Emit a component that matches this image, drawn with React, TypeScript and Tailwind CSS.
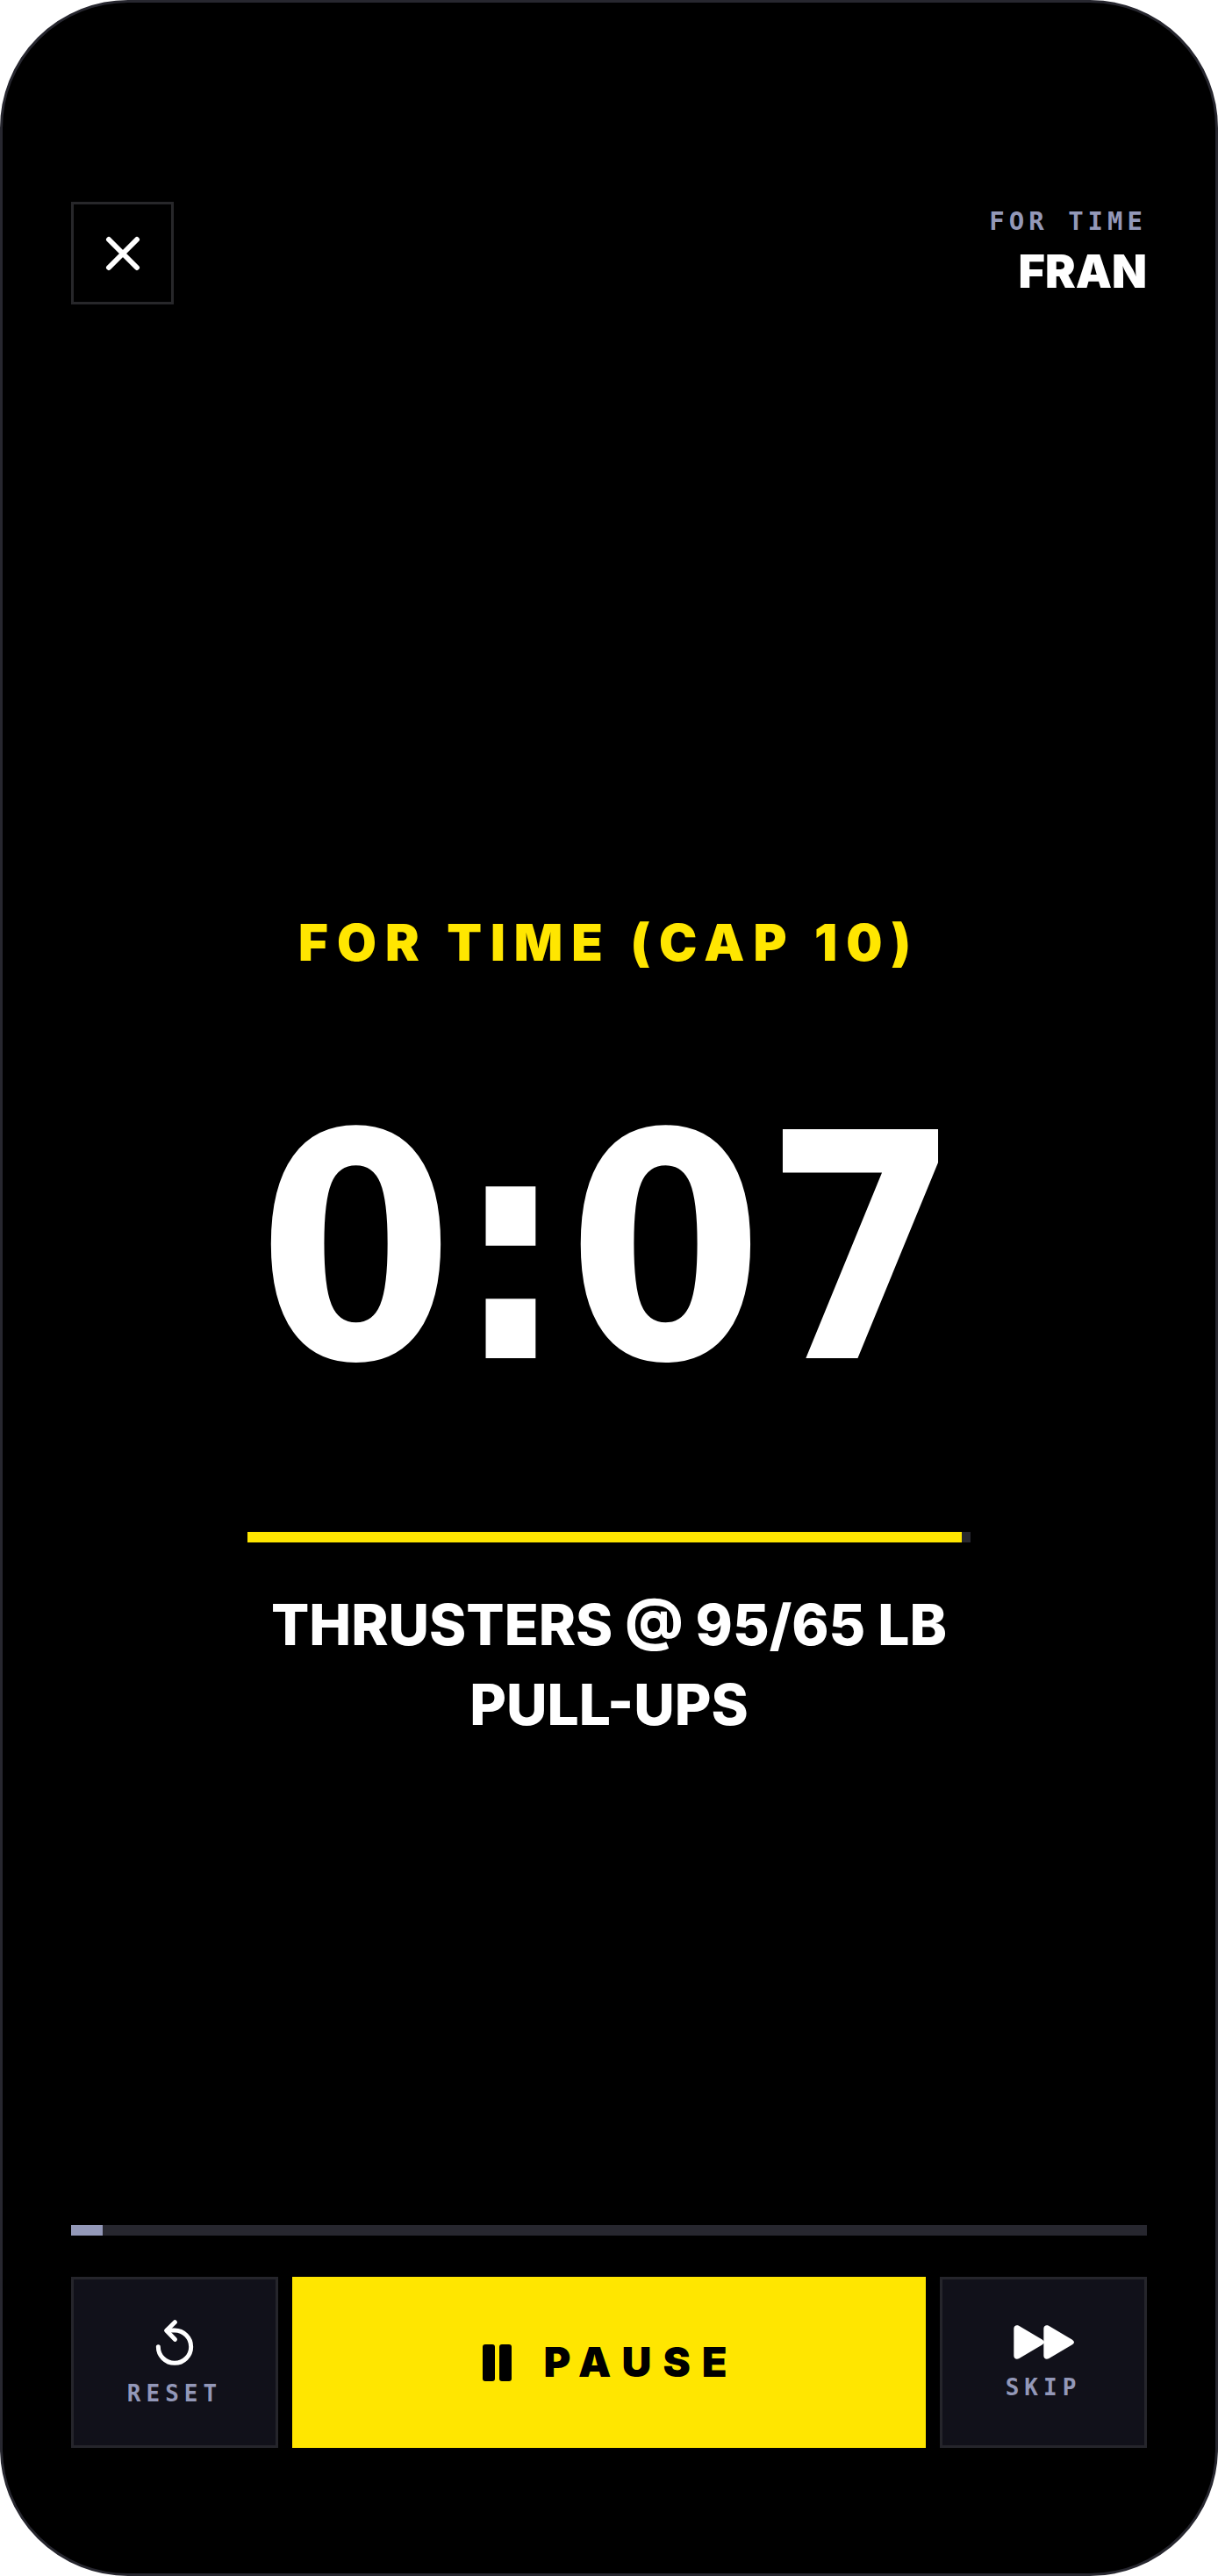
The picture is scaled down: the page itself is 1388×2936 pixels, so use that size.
import React from 'react';

interface ProgressBarProps {
  label: string;
  value: number;
  fillClass: string;
  className?: string;
}

const ProgressBar: React.FC<ProgressBarProps> = ({ label, value, fillClass, className = '' }) => (
  <div
    role="progressbar"
    aria-label={label}
    aria-valuenow={value}
    aria-valuemin={0}
    aria-valuemax={100}
    className={`h-3 bg-[#27272f] ${className}`}
  >
    <div className={`h-full ${fillClass}`} style={{ width: `${value}%` }} />
  </div>
);

interface SideButtonProps {
  label: string;
  children: React.ReactNode;
}

const SideButton: React.FC<SideButtonProps> = ({ label, children }) => (
  <button
    type="button"
    className="flex w-[236px] shrink-0 flex-col items-center justify-center gap-4 border-[3px] border-[#25252b] bg-[#11111a] pt-0.5 text-white"
  >
    {children}
    <span className="font-['DejaVu_Sans_Mono',monospace] text-[26px] leading-8 font-bold tracking-[6px] text-[#9398b8]">
      {label}
    </span>
  </button>
);

const CloseIcon = () => (
  <svg width="40" height="40" viewBox="0 0 40 40" fill="none" stroke="currentColor" strokeWidth="6" strokeLinecap="round" aria-hidden="true">
    <path d="M4 4 36 36M36 4 4 36" />
  </svg>
);

const ResetIcon = () => (
  <svg width="44" height="52" viewBox="0 0 132 156" fill="none" stroke="currentColor" strokeWidth="15" strokeLinecap="round" strokeLinejoin="round" aria-hidden="true">
    <path d="M10 92A56 56 0 1 0 66 36H40" />
    <path d="M67 8 38 37 67 67" />
  </svg>
);

const SkipIcon = () => (
  <svg width="69" height="39" viewBox="0 0 207 117" fill="currentColor" aria-hidden="true">
    <path d="M1 12C1 3 9-2 18 2L99 50Q103 53 103 56V12C103 3 111-2 120 2L201 50Q207 54 207 58.500T201 67L120 115C111 119 103 114 103 105V61Q103 64 99 67L18 115C9 119 1 114 1 105Z" />
  </svg>
);

const PauseIcon = () => (
  <svg width="33" height="42" viewBox="0 0 33 42" fill="currentColor" aria-hidden="true">
    <rect width="14" height="42" rx="3" />
    <rect x="19" width="14" height="42" rx="3" />
  </svg>
);

export default function App() {
  const movements = ['THRUSTERS @ 95/65 LB', 'PULL-UPS'];

  return (
    <div className="flex min-h-screen flex-col rounded-[146px] border-[3px] border-[#27272f] bg-black px-[78px] pt-[227px] pb-[143px] font-['Inter',sans-serif] text-white">
      {/* Header */}
      <header className="flex items-start justify-between">
        <button
          type="button"
          aria-label="Close"
          className="flex size-[117px] items-center justify-center border-[3px] border-[#27272a]"
        >
          <CloseIcon />
        </button>
        <div className="pt-0.5 text-right">
          <p className="font-['DejaVu_Sans_Mono',monospace] text-[29px] leading-10 font-bold tracking-[5px] text-[#9398b8]">
            FOR TIME
          </p>
          <h1 className="text-[52px] leading-[76px] font-black">FRAN</h1>
        </div>
      </header>

      {/* Timer */}
      <main className="flex flex-1 flex-col items-center justify-center pt-[142px] text-center">
        <h2 className="text-[58px] leading-[70px] font-black tracking-[10px] text-[#ffe600]">
          FOR TIME (CAP 10)
        </h2>
        <div
          role="timer"
          className="mt-[127px] font-['DejaVu_Sans_Condensed','DejaVu_Sans',sans-serif] text-[358px] leading-[376px] font-bold"
        >
          0:07
        </div>
        <ProgressBar label="Time remaining" value={98.8} fillClass="bg-[#ffe600]" className="mt-[134px] w-full max-w-[824px]" />
        <ul className="mt-12 text-[64px] leading-[91px] font-extrabold">
          {movements.map((movement) => (
            <li key={movement}>{movement}</li>
          ))}
        </ul>
      </main>

      {/* Controls */}
      <footer>
        <ProgressBar label="Workout progress" value={2.9} fillClass="bg-[#9398b8]" />
        <div className="mt-[47px] flex h-[195px] gap-4">
          <SideButton label="RESET">
            <ResetIcon />
          </SideButton>
          <button
            type="button"
            className="flex flex-1 items-center justify-center gap-9 bg-[#ffe600] pl-1 text-[47px] font-black tracking-[13px] text-black"
          >
            <PauseIcon />
            PAUSE
          </button>
          <SideButton label="SKIP">
            <SkipIcon />
          </SideButton>
        </div>
      </footer>
    </div>
  );
}
